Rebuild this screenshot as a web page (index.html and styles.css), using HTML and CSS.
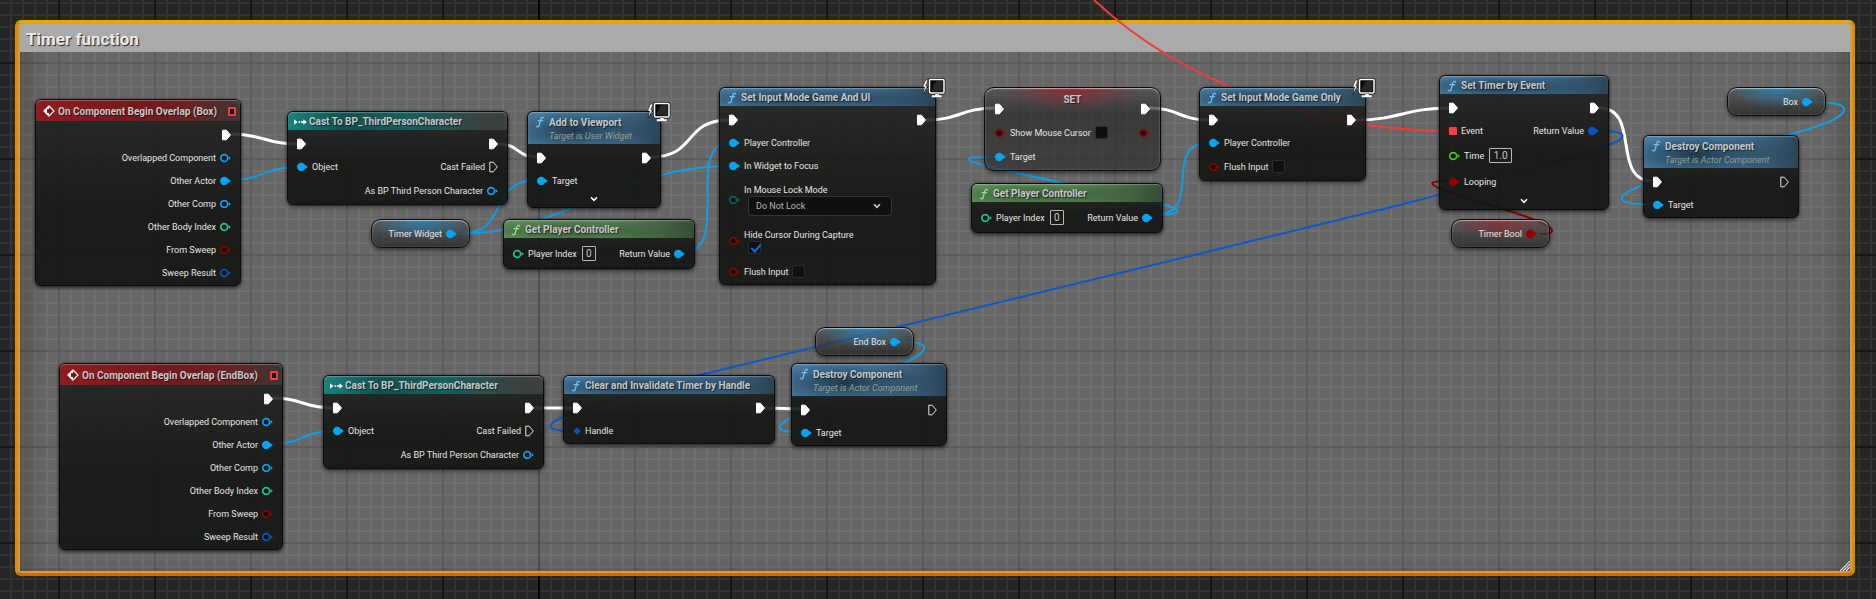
FILE: index.html
```html
<!DOCTYPE html>
<html lang="en">
<head>
<meta charset="utf-8">
<title>Timer function</title>
<link rel="stylesheet" href="styles.css">
</head>
<body>
<svg class="defs" aria-hidden="true">
  <symbol id="exec" viewBox="0 0 9 12"><path d="M.5 1.2h3.9L8.5 6 4.4 10.8H.5z" fill="#fff" stroke="#fff" stroke-linejoin="round"/></symbol>
  <symbol id="exec-open" viewBox="0 0 9 12"><path d="M.8 1.2h3.4L8.3 6 4.2 10.8H.8z" fill="none" stroke="#e4e4e4" stroke-linejoin="round"/></symbol>
  <symbol id="pin" viewBox="0 0 11 10"><circle cx="4.2" cy="5" r="3.400" fill="#0b0f10" stroke="currentColor" stroke-width="1.700"/><path d="M8.600 3 10.900 5 8.600 7z" fill="currentColor"/></symbol>
  <symbol id="pin-on" viewBox="0 0 11 10"><circle cx="4.2" cy="5" r="4.200" fill="currentColor"/><path d="M8 2.800 10.900 5 8 7.200z" fill="currentColor"/></symbol>
  <symbol id="square" viewBox="0 0 8 8"><rect width="8" height="8" rx="1" fill="currentColor"/></symbol>
  <symbol id="diamond" viewBox="0 0 8 8"><path d="M4 .2 7.800 4 4 7.800.2 4z" fill="currentColor"/></symbol>
  <symbol id="func" viewBox="0 0 10 12"><path d="M8.6 2.2C8 .8 6.3 1 5.8 3L4.3 9c-.5 2-2 2.400-2.900 1.200M3 4.700h4.600" fill="none" stroke="currentColor" stroke-width="1.300" stroke-linecap="round"/></symbol>
  <symbol id="event" viewBox="0 0 12 12"><path d="M6 1 11 6 6 11 1 6z" fill="none" stroke="#eee" stroke-width="1.300"/><path d="M6 1v3H4v4h2v3L1 6z" fill="#fff"/><path d="M4.500 4.800h2V3.500L9 6 6.500 8.500V7.200h-2z" fill="#6b1215"/></symbol>
  <symbol id="cast" viewBox="0 0 13 8"><path d="M0 1.200 3.500 4 0 6.800zM4.500 3.300H6v1.400H4.500zM6.800 3.300h2.500V1.200L13 4 9.300 6.800V4.700H6.800z" fill="#fff"/></symbol>
  <symbol id="chevron" viewBox="0 0 8 6"><path d="M1 1.300 4 4.300 7 1.300" fill="none" stroke="currentColor" stroke-width="1.600"/></symbol>
  <symbol id="screen" viewBox="-2 -2 25 22"><path d="M2.500 1-.5 8h2L0 15.500 4.600 7H2.800L5 1z" fill="#fff" stroke="#111" stroke-width=".6"/><rect x="6.500" y=".5" width="14.500" height="13.500" rx="1.500" fill="#080808" stroke="#111" stroke-width="3"/><rect x="6.500" y=".5" width="14.500" height="13.500" rx="1.200" fill="#080808" stroke="#fff" stroke-width="1.500"/><path d="M9 12.500c0-4 2-8.500 5-10.500h5.500v10.500z" fill="#444" opacity=".55"/><path d="M12 14.500h4v1.500h3v2.500H8.500V16H12z" fill="#fff" stroke="#222" stroke-width=".4"/></symbol>
</svg>

<main class="graph">
  <section class="comment">
    <h1 class="comment-title">Timer function</h1>
    <svg class="grip" viewBox="0 0 10 10" aria-hidden="true"><path d="M0 10 10 0M3 10l7-7M6 10l4-4" stroke="#ddd" stroke-width="1.200"/></svg>
  </section>

  <svg class="wires" aria-hidden="true">
    <g class="wire-exec">
      <path d="M231 134C264 134 264 144 297 144"/>
      <path d="M498 144C520 144 516 157 537 157"/>
      <path d="M651 157C697 157 683 120 729 120"/>
      <path d="M926 120C960 120 961 108 995 108"/>
      <path d="M1149 108C1179 108 1179 120 1209 120"/>
      <path d="M1356 120C1400 120 1405 108 1449 108"/>
      <path d="M1599 108C1642 108 1610 181 1653 181"/>
      <path d="M273 398C303 398 303 408 333 408"/>
      <path d="M534 408H573"/>
      <path d="M765 408L801 409"/>
    </g>
    <g class="wire-object">
      <path d="M230 180C264 180 264 167 297 167"/>
      <path d="M272 444C303 444 303 431 333 431"/>
      <path d="M460 234C510 234 487 180 537 180"/>
      <path d="M460 234C560 234 620 166 729 166"/>
      <path d="M686 251C730 251 685 143 729 143"/>
      <path d="M1154 215C1206 215 1160 143 1209 143"/>
      <path d="M1154 215C1186 215 1182 208 1160 204C1110 194 1050 180 1004 170C960 160 957 157 995 157"/>
      <path d="M1815 102C1860 102 1855 118 1787 135C1740 148 1680 172 1645 184C1612 197 1614 205 1653 204"/>
      <path d="M904 342C930 342 932 351 903 363L833 396C815 404 800 411 790 418C772 429 778 432 801 432"/>
    </g>
    <g class="wire-struct">
      <path d="M1601 131C1630 131 1628 139 1605 146C1560 162 1450 192 1400 205L700 375C650 388 600 403 568 415C543 425 545 431 573 431"/>
    </g>
    <g class="wire-bool">
      <path d="M1540 234C1562 234 1552 226 1527 217C1500 207 1460 197 1441 189C1427 183 1430 181 1449 181"/>
    </g>
    <g class="wire-event">
      <path d="M1094 0C1180 80 1310 131 1452 131"/>
    </g>
  </svg>

  <article class="node red n-overlap">
    <header class="head"><svg class="i-event"><use href="#event"/></svg><h2>On Component Begin Overlap (Box)</h2><span class="delegate"></span></header>
    <div class="body">
      <div class="row end"><svg class="i-exec"><use href="#exec"/></svg></div>
      <div class="row end">Overlapped Component<svg class="i-pin object"><use href="#pin"/></svg></div>
      <div class="row end">Other Actor<svg class="i-pin object"><use href="#pin-on"/></svg></div>
      <div class="row end">Other Comp<svg class="i-pin object"><use href="#pin"/></svg></div>
      <div class="row end">Other Body Index<svg class="i-pin int"><use href="#pin"/></svg></div>
      <div class="row end">From Sweep<svg class="i-pin bool"><use href="#pin"/></svg></div>
      <div class="row end">Sweep Result<svg class="i-pin struct"><use href="#pin"/></svg></div>
    </div>
  </article>

  <article class="node teal n-cast">
    <header class="head"><svg class="i-cast"><use href="#cast"/></svg><h2>Cast To BP_ThirdPersonCharacter</h2></header>
    <div class="body">
      <div class="row"><svg class="i-exec"><use href="#exec"/></svg><svg class="i-exec"><use href="#exec"/></svg></div>
      <div class="row"><span class="port"><svg class="i-pin object"><use href="#pin-on"/></svg>Object</span><span class="port">Cast Failed<svg class="i-exec"><use href="#exec-open"/></svg></span></div>
      <div class="row roomy end">As BP Third Person Character<svg class="i-pin object"><use href="#pin"/></svg></div>
    </div>
  </article>

  <article class="node blue n-viewport">
    <svg class="i-screen"><use href="#screen"/></svg>
    <header class="head tall"><svg class="i-func"><use href="#func"/></svg><div><h2>Add to Viewport</h2><p>Target is User Widget</p></div></header>
    <div class="body">
      <div class="row"><svg class="i-exec"><use href="#exec"/></svg><svg class="i-exec"><use href="#exec"/></svg></div>
      <div class="row"><span class="port"><svg class="i-pin object"><use href="#pin-on"/></svg>Target</span></div>
      <button class="expand" type="button" aria-label="Show advanced pins"><svg><use href="#chevron"/></svg></button>
    </div>
  </article>

  <article class="node getter get-object n-widget"><span class="port">Timer Widget<svg class="i-pin object"><use href="#pin-on"/></svg></span></article>

  <article class="node green n-controller1">
    <header class="head"><svg class="i-func"><use href="#func"/></svg><h2>Get Player Controller</h2></header>
    <div class="body">
      <div class="row short"><label class="port"><svg class="i-pin int"><use href="#pin"/></svg>Player Index<input class="num" type="text" value="0"></label><span class="port">Return Value<svg class="i-pin object"><use href="#pin-on"/></svg></span></div>
    </div>
  </article>

  <article class="node blue n-inputui">
    <svg class="i-screen"><use href="#screen"/></svg>
    <header class="head"><svg class="i-func"><use href="#func"/></svg><h2>Set Input Mode Game And UI</h2></header>
    <div class="body">
      <div class="row"><svg class="i-exec"><use href="#exec"/></svg><svg class="i-exec"><use href="#exec"/></svg></div>
      <div class="row"><span class="port"><svg class="i-pin object"><use href="#pin-on"/></svg>Player Controller</span></div>
      <div class="row"><span class="port"><svg class="i-pin object"><use href="#pin-on"/></svg>In Widget to Focus</span></div>
      <div class="stack lock">
        <svg class="i-pin enum"><use href="#pin"/></svg>
        <div><label for="lock">In Mouse Lock Mode</label>
          <div class="pick"><select id="lock"><option>Do Not Lock</option></select><svg><use href="#chevron"/></svg></div></div>
      </div>
      <div class="stack hide">
        <svg class="i-pin bool"><use href="#pin"/></svg>
        <div><label for="hide">Hide Cursor During Capture</label>
          <div class="tick"><input id="hide" type="checkbox" checked></div></div>
      </div>
      <div class="row"><label class="port"><svg class="i-pin bool"><use href="#pin"/></svg>Flush Input<input type="checkbox"></label></div>
    </div>
  </article>

  <article class="node setter n-set">
    <h2>SET</h2>
    <div class="body">
      <div class="row"><svg class="i-exec"><use href="#exec"/></svg><svg class="i-exec"><use href="#exec"/></svg></div>
      <div class="row roomy"><label class="port"><svg class="i-pin bool"><use href="#pin"/></svg>Show Mouse Cursor<input type="checkbox"></label><svg class="i-pin bool"><use href="#pin"/></svg></div>
      <div class="row"><span class="port"><svg class="i-pin object"><use href="#pin-on"/></svg>Target</span></div>
    </div>
  </article>

  <article class="node green n-controller2">
    <header class="head"><svg class="i-func"><use href="#func"/></svg><h2>Get Player Controller</h2></header>
    <div class="body">
      <div class="row short"><label class="port"><svg class="i-pin int"><use href="#pin"/></svg>Player Index<input class="num" type="text" value="0"></label><span class="port">Return Value<svg class="i-pin object"><use href="#pin-on"/></svg></span></div>
    </div>
  </article>

  <article class="node blue n-gameonly">
    <svg class="i-screen"><use href="#screen"/></svg>
    <header class="head"><svg class="i-func"><use href="#func"/></svg><h2>Set Input Mode Game Only</h2></header>
    <div class="body">
      <div class="row"><svg class="i-exec"><use href="#exec"/></svg><svg class="i-exec"><use href="#exec"/></svg></div>
      <div class="row"><span class="port"><svg class="i-pin object"><use href="#pin-on"/></svg>Player Controller</span></div>
      <div class="row roomy"><label class="port"><svg class="i-pin bool"><use href="#pin"/></svg>Flush Input<input type="checkbox"></label></div>
    </div>
  </article>

  <article class="node blue n-timer">
    <header class="head"><svg class="i-func"><use href="#func"/></svg><h2>Set Timer by Event</h2></header>
    <div class="body">
      <div class="row"><svg class="i-exec"><use href="#exec"/></svg><svg class="i-exec"><use href="#exec"/></svg></div>
      <div class="row"><span class="port"><svg class="i-small event"><use href="#square"/></svg>Event</span><span class="port">Return Value<svg class="i-pin struct"><use href="#pin-on"/></svg></span></div>
      <div class="row short"><label class="port"><svg class="i-pin float"><use href="#pin"/></svg>Time<input class="num wide" type="text" value="1.0"></label></div>
      <div class="row roomy"><span class="port"><svg class="i-pin bool"><use href="#pin-on"/></svg>Looping</span></div>
      <button class="expand" type="button" aria-label="Show advanced pins"><svg><use href="#chevron"/></svg></button>
    </div>
  </article>

  <article class="node getter get-bool n-bool"><span class="port">Timer Bool<svg class="i-pin bool"><use href="#pin-on"/></svg></span></article>

  <article class="node blue n-destroy1">
    <header class="head tall"><svg class="i-func"><use href="#func"/></svg><div><h2>Destroy Component</h2><p>Target is Actor Component</p></div></header>
    <div class="body">
      <div class="row"><svg class="i-exec"><use href="#exec"/></svg><svg class="i-exec"><use href="#exec-open"/></svg></div>
      <div class="row"><span class="port"><svg class="i-pin object"><use href="#pin-on"/></svg>Target</span></div>
    </div>
  </article>

  <article class="node getter get-object n-box"><span class="port">Box<svg class="i-pin object"><use href="#pin-on"/></svg></span></article>

  <article class="node red n-overlap-end">
    <header class="head"><svg class="i-event"><use href="#event"/></svg><h2>On Component Begin Overlap (EndBox)</h2><span class="delegate"></span></header>
    <div class="body">
      <div class="row end"><svg class="i-exec"><use href="#exec"/></svg></div>
      <div class="row end">Overlapped Component<svg class="i-pin object"><use href="#pin"/></svg></div>
      <div class="row end">Other Actor<svg class="i-pin object"><use href="#pin-on"/></svg></div>
      <div class="row end">Other Comp<svg class="i-pin object"><use href="#pin"/></svg></div>
      <div class="row end">Other Body Index<svg class="i-pin int"><use href="#pin"/></svg></div>
      <div class="row end">From Sweep<svg class="i-pin bool"><use href="#pin"/></svg></div>
      <div class="row end">Sweep Result<svg class="i-pin struct"><use href="#pin"/></svg></div>
    </div>
  </article>

  <article class="node teal n-cast-end">
    <header class="head"><svg class="i-cast"><use href="#cast"/></svg><h2>Cast To BP_ThirdPersonCharacter</h2></header>
    <div class="body">
      <div class="row"><svg class="i-exec"><use href="#exec"/></svg><svg class="i-exec"><use href="#exec"/></svg></div>
      <div class="row"><span class="port"><svg class="i-pin object"><use href="#pin-on"/></svg>Object</span><span class="port">Cast Failed<svg class="i-exec"><use href="#exec-open"/></svg></span></div>
      <div class="row roomy end">As BP Third Person Character<svg class="i-pin object"><use href="#pin"/></svg></div>
    </div>
  </article>

  <article class="node blue n-clear">
    <header class="head"><svg class="i-func"><use href="#func"/></svg><h2>Clear and Invalidate Timer by Handle</h2></header>
    <div class="body">
      <div class="row"><svg class="i-exec"><use href="#exec"/></svg><svg class="i-exec"><use href="#exec"/></svg></div>
      <div class="row"><span class="port"><svg class="i-small struct"><use href="#diamond"/></svg>Handle</span></div>
    </div>
  </article>

  <article class="node getter get-object n-endbox"><span class="port">End Box<svg class="i-pin object"><use href="#pin-on"/></svg></span></article>

  <article class="node blue n-destroy2">
    <header class="head tall"><svg class="i-func"><use href="#func"/></svg><div><h2>Destroy Component</h2><p>Target is Actor Component</p></div></header>
    <div class="body">
      <div class="row"><svg class="i-exec"><use href="#exec"/></svg><svg class="i-exec"><use href="#exec-open"/></svg></div>
      <div class="row"><span class="port"><svg class="i-pin object"><use href="#pin-on"/></svg>Target</span></div>
    </div>
  </article>
</main>
</body>
</html>
```

FILE: styles.css
```css
* { box-sizing: border-box; }

body {
  margin: 0;
  background: #262626;
  color: #e6e6e6;
  font: 9px/12px Roboto, "Liberation Sans", sans-serif;
}

h1, h2, p { margin: 0; }
svg { display: block; flex: none; }
.defs { position: absolute; width: 0; height: 0; }

/* Canvas with a 12px grid, a heavier line every 96px and the origin axis */
.graph {
  position: relative;
  min-height: 100vh;
  overflow: hidden;
  background-color: #262626;
  background-image:
    linear-gradient(#030303, #030303),
    linear-gradient(90deg, #161616 2px, transparent 2px),
    linear-gradient(#161616 2px, transparent 2px),
    linear-gradient(90deg, #333 2px, transparent 2px),
    linear-gradient(#333 2px, transparent 2px);
  background-size: 2px 100%, 96px 96px, 96px 96px, 12px 12px, 12px 12px;
  background-position: 538px 0, 58px 62px, 58px 62px, 10px 2px, 10px 2px;
  background-repeat: no-repeat, repeat, repeat, repeat, repeat;
}

.comment {
  position: absolute;
  inset: 20px 21px 23px 15px;
  border-radius: 6px;
  border: 3px solid #e08c00;
  border-color: #f2a200 #dd8c00 #cf6c00 #dd8c00;
  background: rgba(255, 255, 255, .3);
  box-shadow:
    inset 0 0 0 2px rgba(255, 180, 70, .75),
    inset 34px 0 22px -22px rgba(0, 0, 0, .22),
    inset -34px 0 22px -22px rgba(0, 0, 0, .22),
    inset 0 -14px 12px -10px rgba(0, 0, 0, .18);
}

.comment-title {
  margin: 1px 2px 0;
  padding: 3px 5px 1px 6px;
  background: #aaa;
  color: #eaeaea;
  font-size: 17px;
  line-height: 24px;
  font-weight: 700;
  text-shadow: 1px 1px 1px #222;
}

.grip { position: absolute; right: 2px; bottom: 2px; width: 10px; height: 10px; }

.wires { position: absolute; inset: 0; width: 100%; height: 100%; fill: none; }
.wire-exec { stroke: #fff; stroke-width: 3; }
.wire-object { stroke: #109fe6; stroke-width: 2; }
.wire-struct { stroke: #0b58c8; stroke-width: 2; }
.wire-bool { stroke: #8c0404; stroke-width: 2; }
.wire-event { stroke: #f23c3c; stroke-width: 2; }

.node {
  position: absolute;
  border: 1px solid #0a0b0a;
  border-radius: 6px;
  background: linear-gradient(rgba(31, 33, 31, .86), rgba(18, 20, 17, .9) 60%);
  box-shadow: 0 2px 4px rgba(0, 0, 0, .55), 0 0 2px rgba(0, 0, 0, .6);
}

.head {
  display: flex;
  align-items: center;
  gap: 4px;
  height: 18px;
  padding: 1px 4px 0 7px;
  border-radius: 5px 5px 0 0;
  box-shadow: inset 0 1px 1px rgba(255, 255, 255, .28);
}
.head.tall { height: 32px; align-items: flex-start; padding-top: 4px; }
.head h2, .setter h2 {
  color: #c6c9ca;
  font-size: 10px;
  line-height: 13px;
  font-weight: 700;
  white-space: nowrap;
  text-shadow: 1px 1px 1px rgba(0, 0, 0, .6);
}
.head p { color: #93a08c; font-style: italic; line-height: 14px; white-space: nowrap; }

.red .head { height: 21px; background: linear-gradient(90deg, #8f1c20, #74191c 50%, #6a2222 75%, #3a3634 100%); }
.teal .head { background: linear-gradient(90deg, #178382, #14504f 25%, #185f5e 55%, #3a4140 90%); }
.blue .head { background: radial-gradient(60% 80% at 35% 60%, rgba(20, 36, 50, .8), transparent), linear-gradient(90deg, #4f88b2 50%, #2b4356); }
.green .head { background: radial-gradient(60% 80% at 35% 60%, rgba(38, 58, 36, .7), transparent), linear-gradient(90deg, #659a62 50%, #354c34); }

.i-func { width: 10px; height: 12px; color: #6fc0f2; }
.green .i-func { color: #94e08c; }
.i-event { width: 12px; height: 12px; }
.i-cast { width: 13px; height: 8px; }
.red .head { gap: 3px; }
.teal .head { padding-left: 6px; gap: 2px; }
.delegate { width: 8px; height: 9px; margin-left: auto; border: 2px solid #f23c3c; border-radius: 1px; background: #1a0505; }

.body { padding: 2px 9px 1px; }
.row { display: flex; justify-content: space-between; align-items: center; gap: 4px; height: 23px; white-space: nowrap; }
.row.end { justify-content: flex-end; }
.row.roomy { height: 25px; }
.row.short { height: 27px; }
.port { display: flex; align-items: center; gap: 4px; }

.i-exec { width: 9px; height: 12px; }
.i-pin { width: 11px; height: 10px; }
.i-small { width: 8px; height: 8px; }
.object { color: #05a4f2; }
.int { color: #1cc495; }
.bool { color: #930000; }
.struct { color: #0754c0; }
.enum { color: #04695c; }
.float { color: #3fd011; }
.event { color: #ff3b3b; }

.expand { display: block; margin: 0 auto; padding: 4px; border: 0; background: none; color: #fff; }
.expand svg { width: 8px; height: 6px; }

input[type="checkbox"] {
  appearance: none;
  position: relative;
  width: 13px;
  height: 13px;
  margin: 0;
  border: 1px solid #2c2c2c;
  border-radius: 2px;
  background: #101010;
}
input[type="checkbox"]:checked::after {
  content: "";
  position: absolute;
  left: 4px;
  top: 0;
  width: 4px;
  height: 8px;
  border: solid #0f6fe0;
  border-width: 0 2px 2px 0;
  transform: rotate(42deg);
}

.num {
  width: 14px;
  height: 15px;
  margin-left: 1px;
  padding: 0;
  border: 1px solid #b8b8b8;
  border-radius: 1px;
  background: transparent;
  color: #c8c8c8;
  font: 10px/13px Roboto, sans-serif;
  text-align: center;
}
.num.wide { width: 23px; }

.stack { display: flex; align-items: center; gap: 4px; }
.stack label { display: block; }
.stack.lock { height: 45px; }
.stack.hide { height: 38px; }
.pick { position: relative; width: 144px; margin-left: 4px; }
.pick select {
  appearance: none;
  display: block;
  width: 100%;
  height: 20px;
  padding: 0 7px;
  border: 1px solid #333;
  border-radius: 3px;
  background: #101010;
  color: #b4b4b4;
  font: 9px/12px Roboto, sans-serif;
}
.pick svg { position: absolute; right: 11px; top: 7px; width: 8px; height: 6px; color: #ccc; }
.tick { display: flex; margin-left: 4px; }

.getter {
  display: flex;
  align-items: center;
  justify-content: flex-end;
  width: 99px;
  height: 29px;
  padding-right: 12px;
  border-radius: 10px;
  white-space: nowrap;
}
.getter, .setter { box-shadow: 0 2px 4px rgba(0, 0, 0, .55), inset 0 1px 1px rgba(255, 255, 255, .5), inset 0 0 2px rgba(255, 255, 255, .25); }
.get-object { background: radial-gradient(50% 75% at 50% 0, rgba(30, 145, 205, .7), transparent), linear-gradient(rgba(80, 82, 82, .65), rgba(30, 30, 30, .7)); }
.get-bool { background: radial-gradient(50% 75% at 50% 0, rgba(160, 35, 40, .7), transparent), linear-gradient(rgba(80, 80, 80, .65), rgba(30, 30, 30, .7)); }
.setter { border-radius: 10px; background: radial-gradient(40% 22px at 50% 0, rgba(150, 35, 40, .8), transparent), linear-gradient(rgba(80, 80, 80, .7), rgba(38, 38, 38, .7) 30%, rgba(46, 46, 46, .7)); }
.setter h2 { padding-top: 5px; text-align: center; }
.setter .body { padding: 0 10px; margin-top: -9px; }

.i-screen { position: absolute; right: -11px; top: -11px; width: 25px; height: 22px; }

/* Node positions on the canvas */
.n-overlap { left: 35px; top: 99px; width: 206px; }
.n-cast { left: 287px; top: 111px; width: 221px; }
.n-viewport { left: 527px; top: 111px; width: 134px; }
.n-widget { left: 371px; top: 219px; }
.n-controller1 { left: 503px; top: 219px; width: 192px; }
.n-inputui { left: 719px; top: 87px; width: 217px; }
.n-set { left: 984px; top: 87px; width: 177px; height: 84px; }
.n-controller2 { left: 971px; top: 183px; width: 192px; }
.n-gameonly { left: 1199px; top: 87px; width: 167px; }
.n-timer { left: 1439px; top: 75px; width: 170px; }
.n-bool { left: 1451px; top: 219px; }
.n-destroy1 { left: 1643px; top: 135px; width: 156px; }
.n-box { left: 1727px; top: 87px; }
.n-overlap-end { left: 59px; top: 363px; width: 224px; }
.n-cast-end { left: 323px; top: 375px; width: 221px; }
.n-clear { left: 563px; top: 375px; width: 212px; }
.n-endbox { left: 815px; top: 327px; }
.n-destroy2 { left: 791px; top: 363px; width: 156px; }
```
